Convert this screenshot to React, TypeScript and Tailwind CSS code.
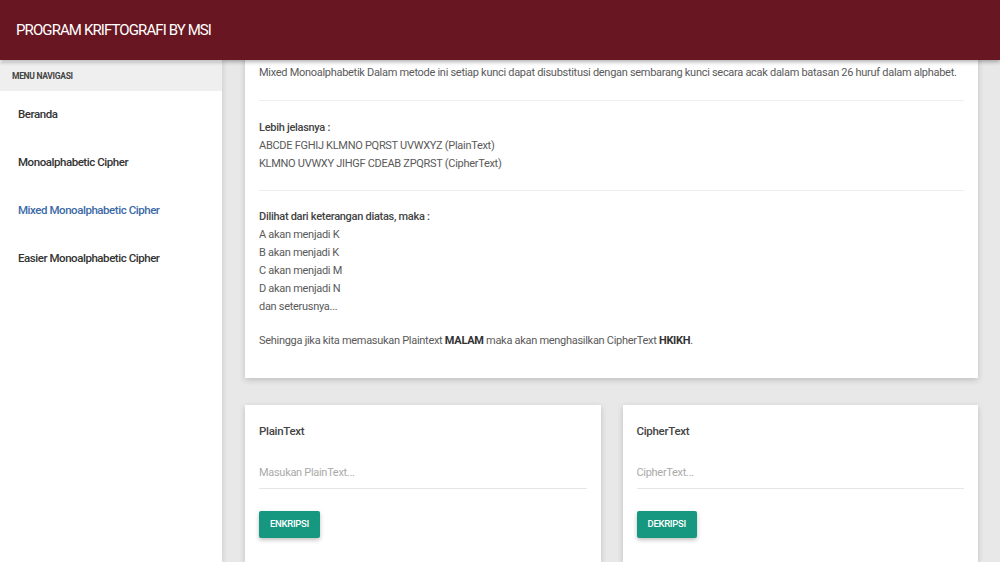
import React from 'react';

const menu = [
  { label: 'Beranda', active: false },
  { label: 'Monoalphabetic Cipher', active: false },
  { label: 'Mixed Monoalphabetic Cipher', active: true },
  { label: 'Easier Monoalphabetic Cipher', active: false },
];

const mapping = ['A akan menjadi K', 'B akan menjadi K', 'C akan menjadi M', 'D akan menjadi N', 'dan seterusnya...'];

const CipherCard = ({ title, placeholder, action }: { title: string; placeholder: string; action: string }) => (
  <div className="flex-1 bg-white shadow-[0_2px_6px_rgba(0,0,0,0.18)] px-[14px] pt-[17px] pb-6">
    <div className="text-[11.5px] font-medium text-[#444] leading-[18px] tracking-[-0.3px]">{title}</div>
    <input
      className="mt-[24px] w-full border-b border-[#e6e6e6] pb-[6px] text-[11px] leading-[18px] tracking-[-0.3px] text-[#444] placeholder:text-[#aaa] outline-none"
      placeholder={placeholder}
    />
    <button className="mt-[22px] h-[27px] px-[11px] bg-[#16977f] text-white text-[9.5px] font-medium tracking-[-0.3px] rounded-[2px] shadow-[0_2px_4px_rgba(0,0,0,0.25)]">
      {action}
    </button>
  </div>
);

export default function App() {
  return (
    <div className="w-[1000px] h-[562px] overflow-hidden flex flex-col bg-[#e8e8e8] font-['Roboto',sans-serif]">
      <header className="h-[60px] shrink-0 bg-[#681621] flex items-center px-4 shadow-[0_2px_4px_rgba(0,0,0,0.3)] relative z-10">
        <span className="text-white text-[15px] tracking-[-0.9px]">PROGRAM KRIFTOGRAFI BY MSI</span>
      </header>

      <div className="flex flex-1 min-h-0">
        <aside className="w-[222px] shrink-0 bg-white pt-[2px] shadow-[1px_0_5px_rgba(0,0,0,0.12)]">
          <div className="h-[29px] bg-[#efefef] flex items-center px-3 text-[8.5px] font-bold text-[#444] tracking-[-0.3px]">
            MENU NAVIGASI
          </div>
          <ul>
            {menu.map((m) => (
              <li
                key={m.label}
                className={`h-[48px] flex items-center px-[18px] text-[11.5px] font-medium tracking-[-0.45px] ${
                  m.active ? 'text-[#3c6aa6]' : 'text-[#333]'
                }`}
              >
                {m.label}
              </li>
            ))}
          </ul>
        </aside>

        <main className="flex-1 pl-[23px] pr-[22px] min-w-0">
          <section className="-mt-[20px] bg-white shadow-[0_2px_6px_rgba(0,0,0,0.18)] px-[14px] pt-[24px] pb-[28px] text-[11px] leading-[18px] text-[#5a5a5a] tracking-[-0.29px]">
            <p>
              Mixed Monoalphabetik Dalam metode ini setiap kunci dapat disubstitusi dengan sembarang kunci secara acak dalam batasan 26 huruf dalam alphabet.
            </p>
            <div className="h-px bg-[#eeeeee] mt-[18px] mb-[18px]" />
            <p className="font-medium text-[#444]">Lebih jelasnya :</p>
            <p>ABCDE FGHIJ KLMNO PQRST UVWXYZ (PlainText)</p>
            <p>KLMNO UVWXY JIHGF CDEAB ZPQRST (CipherText)</p>
            <div className="h-px bg-[#eeeeee] mt-[17px] mb-[17px]" />
            <p className="font-medium text-[#444]">Dilihat dari keterangan diatas, maka :</p>
            {mapping.map((l) => (
              <p key={l}>{l}</p>
            ))}
            <p className="mt-[16px]">
              Sehingga jika kita memasukan Plaintext <b className="font-bold text-[#333]">MALAM</b> maka akan menghasilkan CipherText{' '}
              <b className="font-bold text-[#333]">HKIKH</b>.
            </p>
          </section>

          <div className="flex gap-[22px] mt-[27px]">
            <CipherCard title="PlainText" placeholder="Masukan PlainText..." action="ENKRIPSI" />
            <CipherCard title="CipherText" placeholder="CipherText..." action="DEKRIPSI" />
          </div>
        </main>
      </div>
    </div>
  );
}
